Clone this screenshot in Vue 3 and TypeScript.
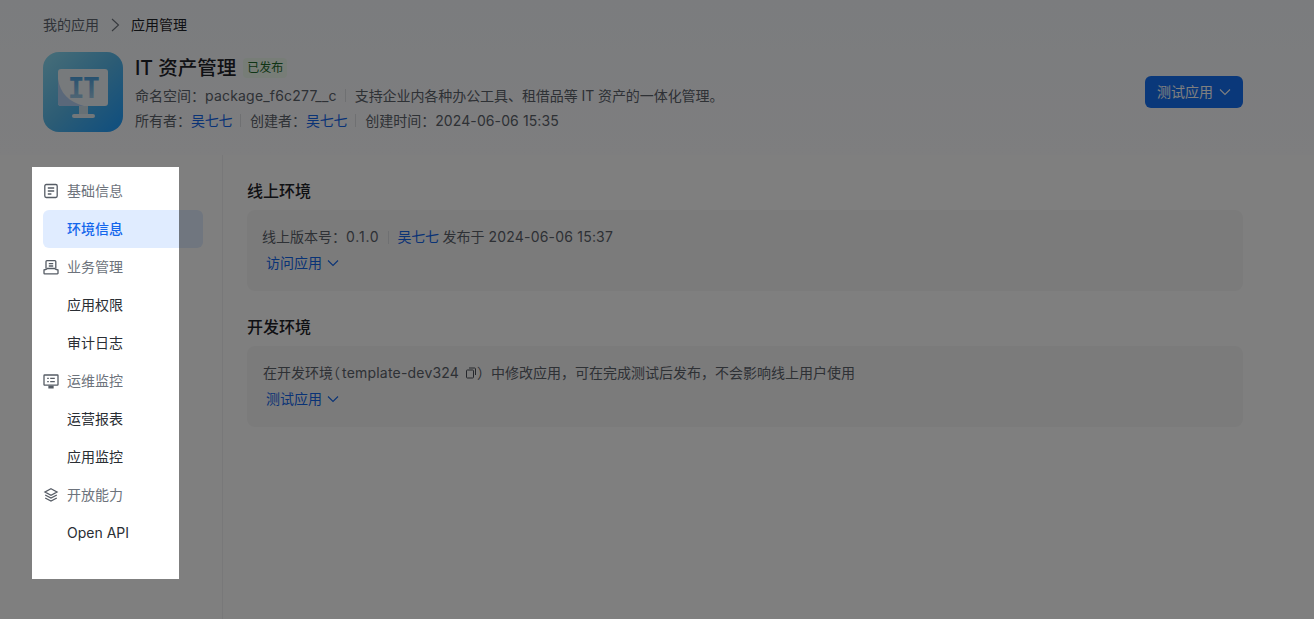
<script setup lang="ts">
interface NavItem {
  label: string
  active?: boolean
}

interface NavGroup {
  label: string
  icon: 'doc' | 'book' | 'screen' | 'layers'
  items: NavItem[]
}

const groups: NavGroup[] = [
  { label: '基础信息', icon: 'doc', items: [{ label: '环境信息', active: true }] },
  { label: '业务管理', icon: 'book', items: [{ label: '应用权限' }, { label: '审计日志' }] },
  { label: '运维监控', icon: 'screen', items: [{ label: '运营报表' }, { label: '应用监控' }] },
  { label: '开放能力', icon: 'layers', items: [{ label: 'Open API' }] },
]
</script>

<template>
  <div class="page">
    <header class="head">
      <nav class="crumbs">
        <span class="crumb-parent">我的应用</span>
        <svg class="crumb-sep" width="10" height="14" viewBox="0 0 10 14"><path d="M2 1 8.5 7 2 13" fill="none" stroke="#6d737b" stroke-width="1.1" /></svg>
        <span class="crumb-current">应用管理</span>
      </nav>
      <div class="app-row">
        <svg class="logo" width="80" height="80" viewBox="0 0 80 80">
          <defs>
            <linearGradient id="logoBg" x1="0" y1="0" x2="1" y2="1">
              <stop offset="0" stop-color="#8fdcf2" />
              <stop offset="0.5" stop-color="#58b8ea" />
              <stop offset="1" stop-color="#1c9cff" />
            </linearGradient>
            <linearGradient id="logoIt" x1="0" y1="0" x2="0" y2="1">
              <stop offset="0" stop-color="#3a98dc" />
              <stop offset="1" stop-color="#b8d8ec" />
            </linearGradient>
          </defs>
          <rect width="80" height="80" rx="16" fill="url(#logoBg)" />
          <rect x="15" y="17" width="50" height="37" rx="3" fill="#eef4f8" />
          <path d="M15 27c2 14 11 23 26 27H18a3 3 0 0 1-3-3z" fill="#b4d0f4" />
          <text x="40" y="46" text-anchor="middle" class="logo-text" fill="url(#logoIt)">IT</text>
          <rect x="36" y="54" width="9" height="9" fill="#cfe0ea" />
          <rect x="29" y="62" width="23" height="4" rx="2" fill="#e4eef4" />
        </svg>
        <div class="app-info">
          <div class="title-line">
            <span class="app-name">IT 资产管理</span>
            <span class="tag">已发布</span>
          </div>
          <div class="meta">
            <span>命名空间：<span class="num">package_f6c277__c</span></span>
            <i class="bar"></i>
            <span class="desc">支持企业内各种办公工具、租借品等 IT 资产的一体化管理。</span>
          </div>
          <div class="meta">
            <span>所有者：<a class="link">吴七七</a></span>
            <i class="bar"></i>
            <span>创建者：<a class="link">吴七七</a></span>
            <i class="bar"></i>
            <span>创建时间：<span class="time">2024-06-06 15:35</span></span>
          </div>
        </div>
        <button class="test-btn" type="button">
          测试应用
          <svg width="12" height="8" viewBox="0 0 12 8"><path d="M1 1.5 6 6.5l5-5" fill="none" stroke="#fff" stroke-width="1.1" /></svg>
        </button>
      </div>
    </header>

    <div class="body">
      <aside class="side">
        <template v-for="group in groups" :key="group.label">
          <div class="group-label">
            <svg class="group-icon" width="16" height="16" viewBox="0 0 16 16" fill="none" stroke="#565c65" stroke-width="1.3">
              <template v-if="group.icon === 'doc'">
                <rect x="1.8" y="1.5" width="12.4" height="13" rx="1.4" />
                <path d="M4.8 5h6.4M4.8 8h6.4M4.8 11h3.6" />
              </template>
              <template v-else-if="group.icon === 'book'">
                <path d="M3 9.5V2.6a1 1 0 0 1 1-1h7.8a1 1 0 0 1 1 1v6.9" />
                <path d="M1 14.2V11c1.6-.2 2.6-.6 3.4-1.5h7.2c.8.9 1.8 1.3 3.4 1.5v3.2a.6.6 0 0 1-.6.6H1.6a.6.6 0 0 1-.6-.6z" />
                <path d="M5.8 4.6h4.4M5.8 7h4.4" />
              </template>
              <template v-else-if="group.icon === 'screen'">
                <rect x="1" y="2" width="14" height="10.2" rx="0.6" />
                <path d="M4.2 5.4h1.6M7.2 5.4h4.6M4.2 8.6h1.6M7.2 8.6h4.6" />
                <path d="M6 13.5h4v1.3H6z" fill="#565c65" />
              </template>
              <template v-else>
                <path d="M8 1.8 14 5 8 8.2 2 5z" />
                <path d="M2.2 8 8 11l5.8-3M2.2 11 8 14l5.8-3" />
              </template>
            </svg>
            <span>{{ group.label }}</span>
          </div>
          <div v-for="item in group.items" :key="item.label" class="nav-item" :class="{ active: item.active }">
            {{ item.label }}
          </div>
        </template>
      </aside>

      <main class="main">
        <section class="env">
          <h2>线上环境</h2>
          <div class="card">
            <div class="card-line">
              <span>线上版本号：<span class="num version">0.1.0</span></span>
              <i class="bar"></i>
              <span><a class="link">吴七七</a> 发布于 <span class="num">2024-06-06 15:37</span></span>
            </div>
            <a class="action">
              访问应用
              <svg width="12" height="8" viewBox="0 0 12 8"><path d="M1 1.5 6 6.5l5-5" fill="none" stroke="#1366ec" stroke-width="1.1" /></svg>
            </a>
          </div>
        </section>
        <section class="env">
          <h2>开发环境</h2>
          <div class="card">
            <div class="card-line">
              <span class="dev-line">在开发环境<span class="paren">（</span><span class="num">template-dev324</span><svg class="copy" width="12" height="12" viewBox="0 0 12 12" fill="none" stroke="#4a4f57" stroke-width="1"><rect x="1.5" y="3" width="7" height="8" rx="0.8" /><path d="M4 1h5.8a.8.8 0 0 1 .7.8V8" /></svg>）中修改应用，可在完成测试后发布，不会影响线上用户使用</span>
            </div>
            <a class="action">
              测试应用
              <svg width="12" height="8" viewBox="0 0 12 8"><path d="M1 1.5 6 6.5l5-5" fill="none" stroke="#1366ec" stroke-width="1.1" /></svg>
            </a>
          </div>
        </section>
      </main>
    </div>

    <div class="spotlight"></div>
  </div>
</template>

<style>
html,
body {
  margin: 0;
  overflow: hidden;
}
</style>

<style scoped>
.page {
  position: relative;
  height: 619px;
  overflow: hidden;
  display: flex;
  flex-direction: column;
  background: #fff;
  color: #1f2329;
  font-family: Inter, "Noto Sans CJK SC", sans-serif;
  font-size: 14px;
  line-height: 22px;
}

.head {
  height: 155px;
  box-sizing: border-box;
  padding: 14px 71px 0 43px;
  background: linear-gradient(180deg, #f6f9fd, #fcfcfe);
}

.crumbs {
  display: flex;
  align-items: center;
  font-size: 14px;
}

.crumb-parent {
  color: #606770;
}

.crumb-sep {
  margin: 0 11px;
}

.app-row {
  display: flex;
  align-items: flex-start;
  margin-top: 16px;
}

.logo {
  flex: none;
}

.logo-text {
  font-family: "DejaVu Sans Mono", monospace;
  font-size: 28px;
  font-weight: 700;
  letter-spacing: -1.5px;
}

.app-info {
  flex: 1;
  margin-left: 12px;
  color: #5c626b;
}

.title-line {
  display: flex;
  align-items: center;
  height: 30px;
  padding-top: 1px;
  margin-bottom: 1px;
}

.app-name {
  font-size: 19.5px;
  font-weight: 500;
  color: #1f2329;
}

.tag {
  margin-left: 7px;
  padding: 0 4px;
  border-radius: 4px;
  background: #eefaef;
  color: #1f6a2c;
  font-size: 12px;
  line-height: 20px;
}

.meta {
  display: flex;
  align-items: center;
  height: 23px;
  margin-bottom: 2px;
}

.bar {
  width: 1px;
  height: 13px;
  margin: 0 9px 0 8px;
  background: #dfe1e4;
}

.desc {
  letter-spacing: -0.07px;
}

.num {
  letter-spacing: 0.2px;
}

.time {
  letter-spacing: 0.1px;
}

.version {
  letter-spacing: 0.8px;
}

.dev-line {
  padding-left: 1px;
}

.paren {
  font-feature-settings: "halt";
  margin-right: 2px;
}

.link {
  color: #1366ec;
  letter-spacing: -0.3px;
}

.test-btn {
  display: flex;
  align-items: center;
  gap: 6px;
  height: 32px;
  margin-top: 24px;
  padding: 0 12px;
  border: 0;
  border-radius: 6px;
  background: #1470f5;
  color: #fff;
  font: inherit;
}

.body {
  flex: 1;
  display: flex;
  min-height: 0;
}

.side {
  width: 223px;
  box-sizing: border-box;
  flex: none;
  padding: 17px 19px 0 43px;
  border-right: 1px solid #f0f1f2;
}

.group-label {
  display: flex;
  align-items: center;
  height: 38px;
  color: #6d737c;
}

.group-icon {
  flex: none;
  margin: 0 8px 0 0;
}

.nav-item {
  height: 38px;
  padding-left: 24px;
  border-radius: 6px;
  color: #2a2e34;
  line-height: 38px;
}

.nav-item.active {
  background: #e0ecff;
  color: #1366ec;
  font-weight: 500;
}

.main {
  flex: 1;
  padding: 21px 71px 0 24px;
}

.env {
  margin-bottom: 21px;
}

.env h2 {
  margin: 0 0 4px;
  font-size: 16px;
  font-weight: 500;
  line-height: 30px;
}

.card {
  height: 81px;
  box-sizing: border-box;
  padding: 15px 15px 0;
  border-radius: 8px;
  background: #f7f7f7;
  color: #5c626b;
}

.card-line {
  display: flex;
  align-items: center;
  height: 24px;
}

.copy {
  margin-left: 6px;
  vertical-align: -1px;
}

.action {
  display: inline-flex;
  align-items: center;
  gap: 5px;
  margin: 3px 0 0 4px;
  color: #1366ec;
}

.spotlight {
  position: absolute;
  left: 32.3px;
  top: 166.7px;
  width: 146.4px;
  height: 412.6px;
  box-shadow: 0 0 0 1400px rgba(0, 0, 0, 0.5);
}
</style>
